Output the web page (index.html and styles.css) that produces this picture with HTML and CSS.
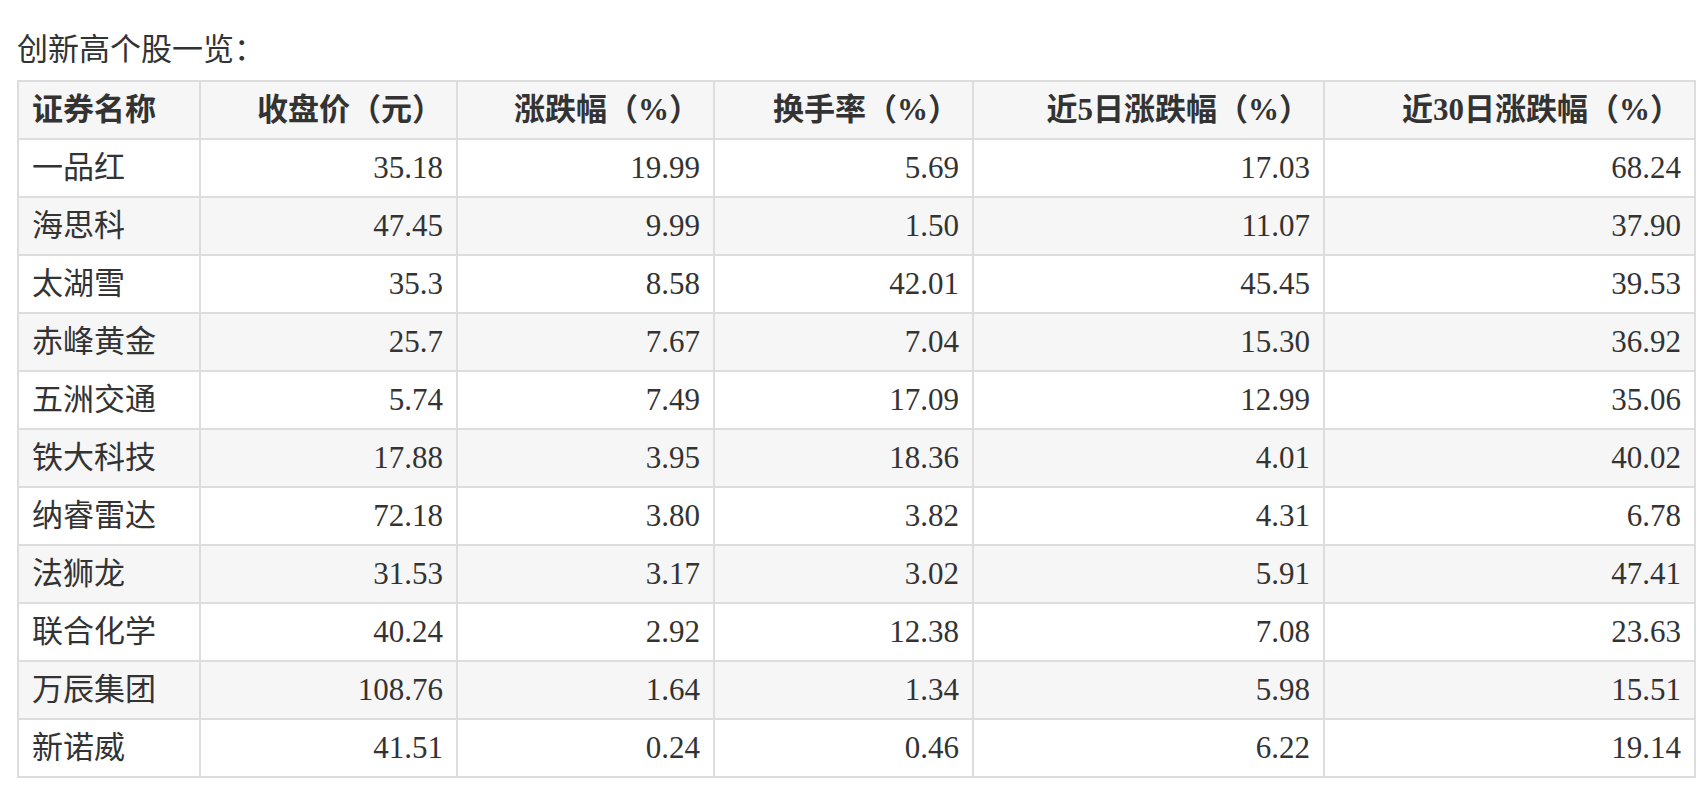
FILE: index.html
```html
<!DOCTYPE html>
<html lang="zh-CN">
<head>
<meta charset="utf-8">
<title>创新高个股一览</title>
<link rel="stylesheet" href="styles.css">
</head>
<body>
<div class="page">
  <p class="title">创新高个股一览：</p>
  <table class="stocks">
    <colgroup>
      <col class="c1"><col class="c2"><col class="c3"><col class="c4"><col class="c5"><col class="c6">
    </colgroup>
    <thead>
      <tr>
        <th class="name">证券名称</th>
        <th>收盘价（元）</th>
        <th>涨跌幅（%）</th>
        <th>换手率（%）</th>
        <th>近5日涨跌幅（%）</th>
        <th>近30日涨跌幅（%）</th>
      </tr>
    </thead>
    <tbody>
      <tr><td class="name">一品红</td><td>35.18</td><td>19.99</td><td>5.69</td><td>17.03</td><td>68.24</td></tr>
      <tr><td class="name">海思科</td><td>47.45</td><td>9.99</td><td>1.50</td><td>11.07</td><td>37.90</td></tr>
      <tr><td class="name">太湖雪</td><td>35.3</td><td>8.58</td><td>42.01</td><td>45.45</td><td>39.53</td></tr>
      <tr><td class="name">赤峰黄金</td><td>25.7</td><td>7.67</td><td>7.04</td><td>15.30</td><td>36.92</td></tr>
      <tr><td class="name">五洲交通</td><td>5.74</td><td>7.49</td><td>17.09</td><td>12.99</td><td>35.06</td></tr>
      <tr><td class="name">铁大科技</td><td>17.88</td><td>3.95</td><td>18.36</td><td>4.01</td><td>40.02</td></tr>
      <tr><td class="name">纳睿雷达</td><td>72.18</td><td>3.80</td><td>3.82</td><td>4.31</td><td>6.78</td></tr>
      <tr><td class="name">法狮龙</td><td>31.53</td><td>3.17</td><td>3.02</td><td>5.91</td><td>47.41</td></tr>
      <tr><td class="name">联合化学</td><td>40.24</td><td>2.92</td><td>12.38</td><td>7.08</td><td>23.63</td></tr>
      <tr><td class="name">万辰集团</td><td>108.76</td><td>1.64</td><td>1.34</td><td>5.98</td><td>15.51</td></tr>
      <tr><td class="name">新诺威</td><td>41.51</td><td>0.24</td><td>0.46</td><td>6.22</td><td>19.14</td></tr>
    </tbody>
  </table>
</div>
</body>
</html>
```

FILE: styles.css
```css
html, body {
  margin: 0;
  padding: 0;
  background: #ffffff;
}

body {
  font-family: "Liberation Serif", "Noto Sans CJK SC", serif;
  color: #333333;
}

.page {
  padding: 27px 8px 0 17px;
}

.title {
  margin: 0 0 7px 0;
  font-size: 31px;
  line-height: 46px;
  height: 46px;
}

.stocks {
  border-collapse: collapse;
  table-layout: fixed;
  width: 1679px;
  font-size: 31px;
  border: 2px solid #dddddd;
}

.c1 { width: 182px; }
.c2 { width: 257px; }
.c3 { width: 257px; }
.c4 { width: 259px; }
.c5 { width: 351px; }
.c6 { width: 371px; }

.stocks th,
.stocks td {
  border: 2px solid #dddddd;
  height: 56px;
  padding: 0 13px;
  text-align: right;
  white-space: nowrap;
  line-height: 56px;
}

.stocks th {
  font-weight: bold;
  background: #f6f6f6;
}

.stocks .name {
  text-align: left;
}

.stocks tbody tr:nth-child(even) td {
  background: #f6f6f6;
}
```
